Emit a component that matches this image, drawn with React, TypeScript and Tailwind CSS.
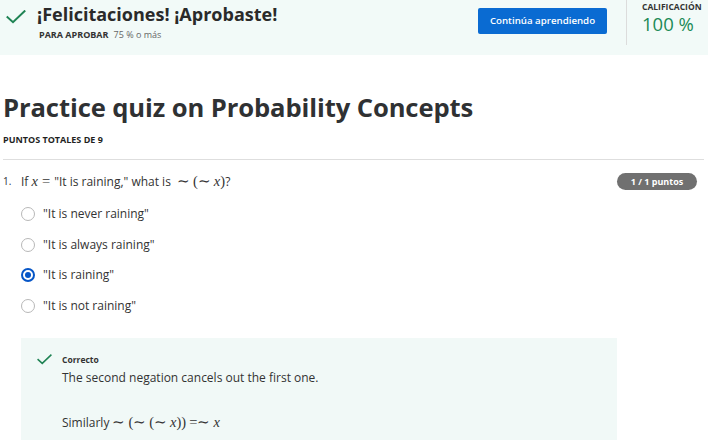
import React from "react";

const Check = ({ className }: { className?: string }) => (
  <svg viewBox="0 0 20 14" className={className} fill="none">
    <path d="M1.5 7.2 L7 12.2 L18.5 1.2" stroke="#1f8354" strokeWidth="2" strokeLinecap="square" />
  </svg>
);

const M = ({ children, className }: { children: React.ReactNode; className?: string }) => (
  <span className={"[font-family:'Liberation_Serif',serif] text-[14.5px] " + (className ?? "")}>{children}</span>
);
const X = () => <span className="[font-family:'Liberation_Serif',serif] italic text-[14.5px]">x</span>;

const Radio = ({ checked }: { checked?: boolean }) =>
  checked ? (
    <span className="w-[14px] h-[14px] rounded-full border-2 border-[#0656c7] flex items-center justify-center">
      <span className="w-[6px] h-[6px] rounded-full bg-[#0656c7]" />
    </span>
  ) : (
    <span className="w-[14px] h-[14px] rounded-full border border-[#b8b8b8] bg-white" />
  );

export default function App() {
  const opts = [
    { t: '"It is never raining"' },
    { t: '"It is always raining"' },
    { t: '"It is raining"', c: true },
    { t: '"It is not raining"' },
  ];
  return (
    <div className="w-[708px] h-[440px] overflow-hidden bg-white [font-family:'Open_Sans',sans-serif] text-[#1f1f1f]">
      <div className="h-[55px] bg-[#f2faf8] flex">
        <div className="pl-[6px] pt-[3px] flex-1 flex">
          <Check className="w-[20px] h-[14px] mt-[7px]" />
          <div className="ml-[11px]">
            <div className="text-[18px] font-bold leading-[22px] text-[#2a2a2a]">¡Felicitaciones! ¡Aprobaste!</div>
            <div className="mt-[5px] text-[9px] leading-[10px] ml-[2px]">
              <span className="font-bold text-[#333]">PARA APROBAR</span>
              <span className="ml-[5px] text-[#666]">75 % o más</span>
            </div>
          </div>
        </div>
        <div className="pt-[8px] pr-[19px]">
          <div className="w-[129px] h-[26px] bg-[#0a6bd2] rounded-[2px] text-white text-[9.7px] font-semibold flex items-center justify-center">
            Continúa aprendiendo
          </div>
        </div>
        <div className="w-px h-[45px] bg-[#dcdcdc]" />
        <div className="w-[81px] pl-[15px] pt-[2px]">
          <div className="text-[8.5px] font-bold leading-[10px] text-[#333]">CALIFICACIÓN</div>
          <div className="text-[18.5px] leading-[22px] text-[#1b8a57] mt-[1px]">100 %</div>
        </div>
      </div>

      <div className="pl-[3px] pt-[36px]">
        <h1 className="text-[25.6px] font-bold leading-[34px] text-[#2f3133] tracking-[-0.1px]">
          Practice quiz on Probability Concepts
        </h1>
        <div className="mt-[10px] text-[9px] font-bold leading-[10px] text-[#1f1f1f]">PUNTOS TOTALES DE 9</div>
        <div className="mt-[14px] h-px bg-[#dedede] mr-[4px]" />

        <div className="mt-[12px] flex items-start pr-[11px]">
          <span className="text-[10px] leading-[18px] text-[#333] w-[18px]">1.</span>
          <div className="flex-1 text-[12px] leading-[18px] text-[#333]">
            If <X /><M className="mx-[4px]">=</M>"It is raining," what is <M className="mx-[3px]">∼</M><M>(</M><M className="mr-[3px]">∼</M><X /><M>)</M>?
          </div>
          <span className="mt-[1px] h-[17px] w-[80px] justify-center rounded-full bg-[#707070] text-white text-[9px] font-bold flex items-center">
            1 / 1 puntos
          </span>
        </div>

        <div className="mt-[14px] ml-[18px] flex flex-col gap-[12.7px]">
          {opts.map((o, i) => (
            <div key={i} className="flex items-center h-[18px]">
              <Radio checked={o.c} />
              <span className="ml-[8px] text-[12px] text-[#333]">{o.t}</span>
            </div>
          ))}
        </div>

        <div className="mt-[23px] ml-[18px] w-[596px] h-[120px] bg-[#f1f9f7] pt-[17px] pl-[16px] flex">
          <Check className="w-[15px] h-[11px] -mt-[1px]" />
          <div className="ml-[10px]">
            <div className="text-[8.5px] font-bold leading-[10px] text-[#333]">Correcto</div>
            <div className="mt-[5px] text-[12px] leading-[16px] text-[#333]">The second negation cancels out the first one.</div>
            <div className="mt-[27px] text-[12px] leading-[18px] text-[#333]">
              Similarly<M className="mx-[3px]">∼</M><M>(</M><M className="mr-[3px]">∼</M><M>(</M><M className="mr-[3px]">∼</M><X /><M>))</M><M className="mx-[3px]">=∼</M><X />
            </div>
          </div>
        </div>
      </div>
    </div>
  );
}
